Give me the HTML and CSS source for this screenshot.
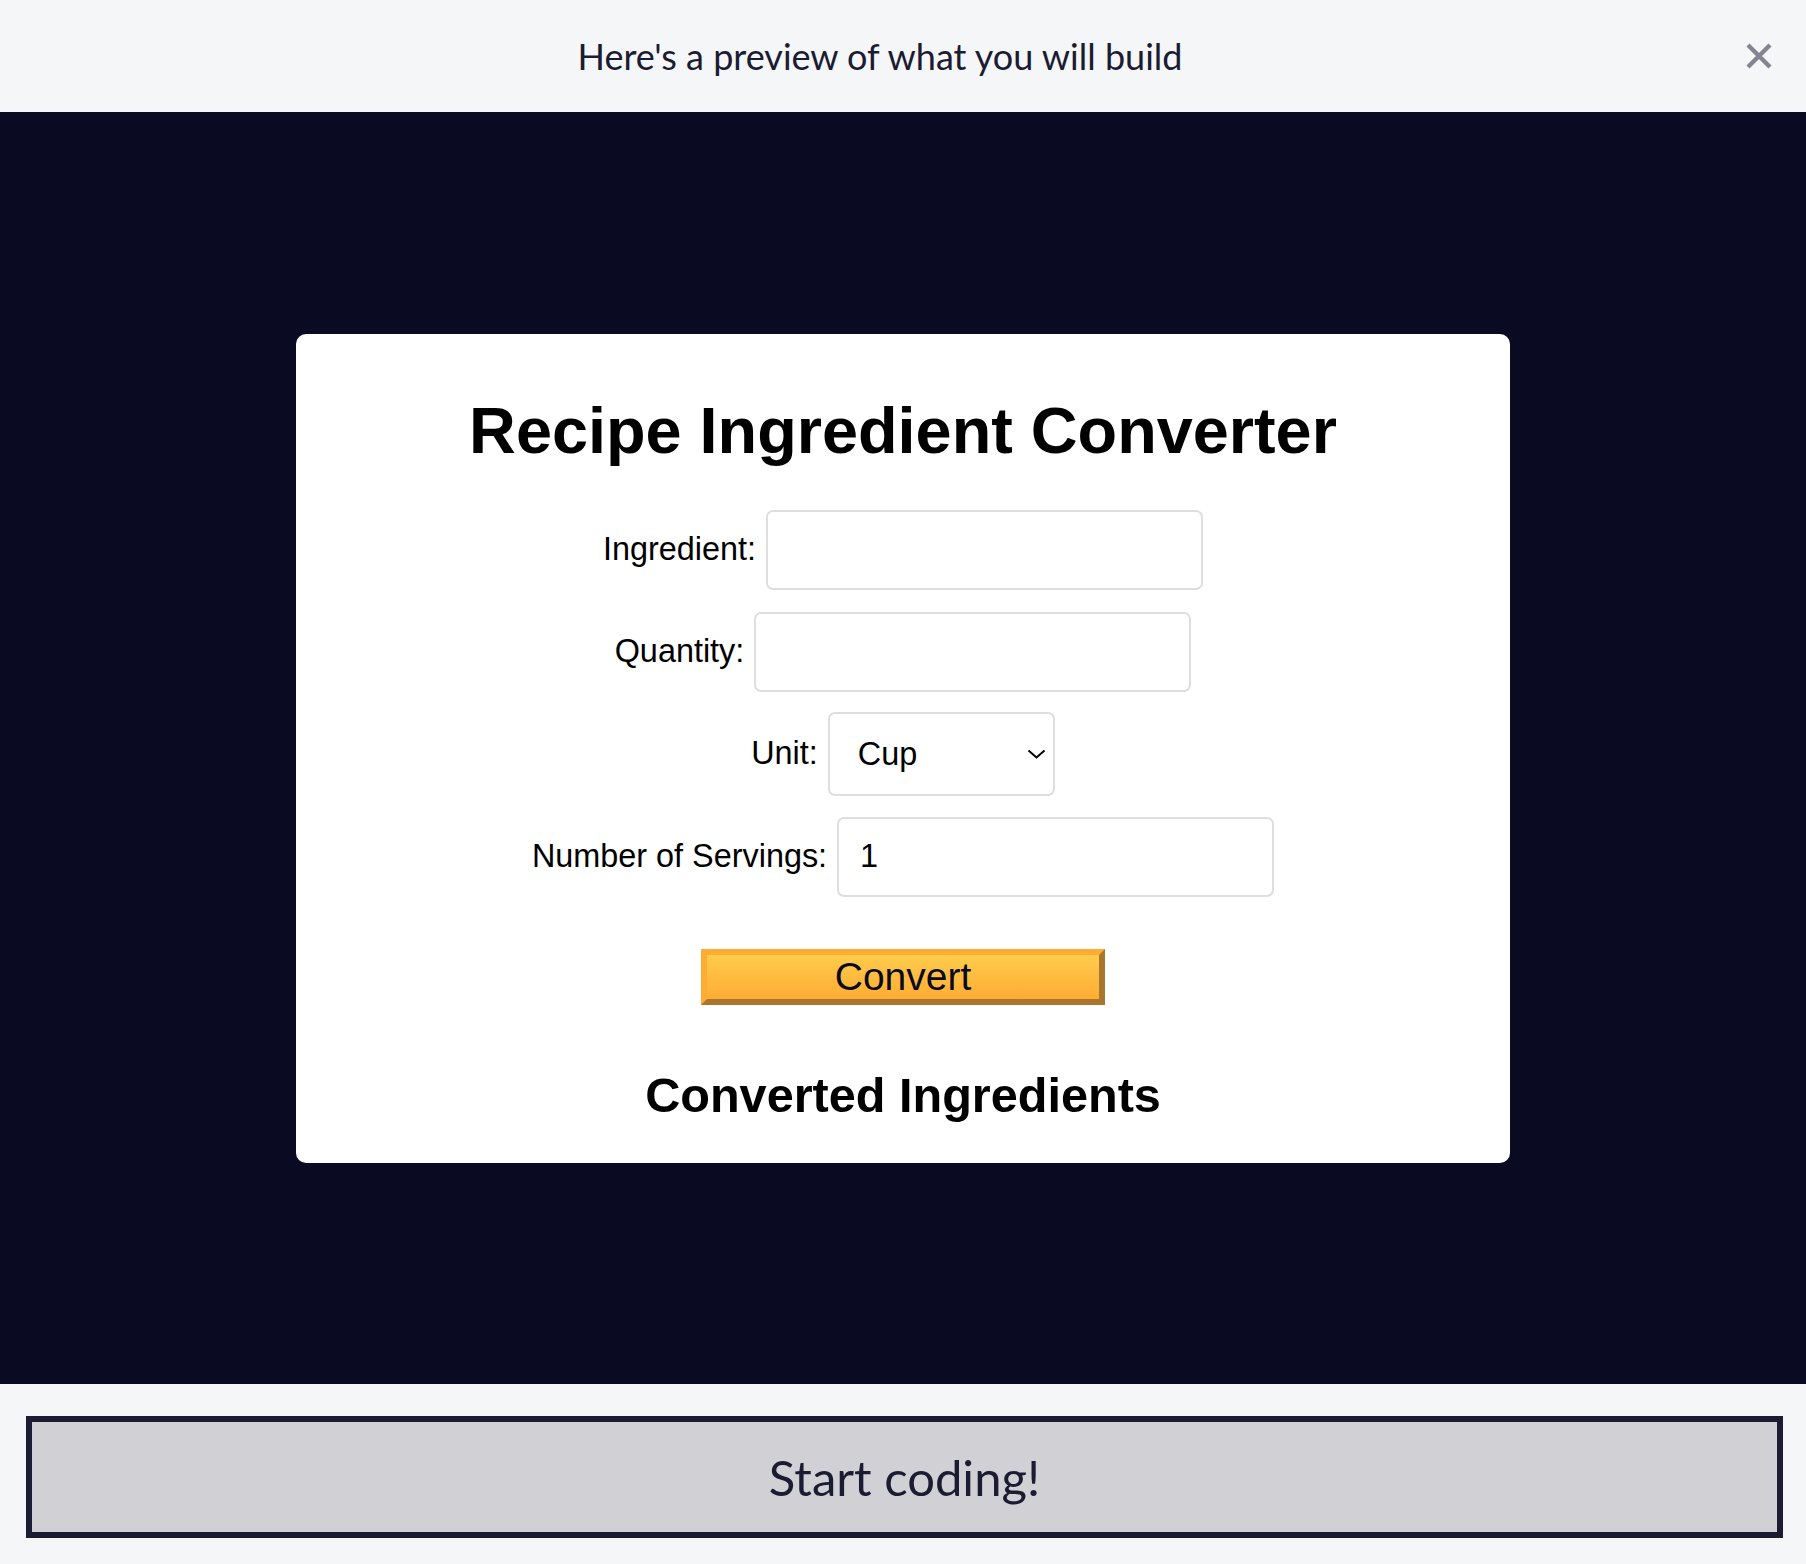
FILE: index.html
```html
<!DOCTYPE html>
<html lang="en">
<head>
<meta charset="utf-8">
<title>Preview</title>
<link rel="stylesheet" href="styles.css">
</head>
<body>
<div class="page">
  <header class="topbar">
    <p class="topbar-title">Here's a preview of what you will build</p>
    <button class="close" type="button" aria-label="Close">
      <svg width="26" height="26" viewBox="0 0 26 26"><path d="M2 2 L24 24 M24 2 L2 24" stroke="#858591" stroke-width="4.4" fill="none"/></svg>
    </button>
  </header>
  <main class="preview">
    <div class="card">
      <h1 class="card-title">Recipe Ingredient Converter</h1>
      <form class="form">
        <div class="row row-1">
          <label class="label" for="ingredient">Ingredient:</label>
          <input class="field" id="ingredient" type="text">
        </div>
        <div class="row row-2">
          <label class="label" for="quantity">Quantity:</label>
          <input class="field" id="quantity" type="number">
        </div>
        <div class="row row-3">
          <label class="label" for="unit">Unit:</label>
          <div class="select-wrap">
            <select class="select" id="unit">
              <option>Cup</option>
              <option>Gram</option>
              <option>Ounce</option>
              <option>Teaspoon</option>
              <option>Tablespoon</option>
            </select>
            <svg class="chevron" width="19" height="10" viewBox="0 0 19 10"><path d="M1.5 1.5 L9.5 8.5 L17.5 1.5" stroke="#000" stroke-width="2" fill="none"/></svg>
          </div>
        </div>
        <div class="row row-4">
          <label class="label" for="servings">Number of Servings:</label>
          <input class="field" id="servings" type="text" value="1">
        </div>
        <button class="convert" type="button">Convert</button>
      </form>
      <h2 class="result-title">Converted Ingredients</h2>
    </div>
  </main>
  <footer class="footer">
    <button class="start" type="button">Start coding!</button>
  </footer>
</div>
</body>
</html>
```

FILE: styles.css
```css
html, body {
  margin: 0;
  padding: 0;
}

body {
  background: #f5f6f7;
  font-family: "Lato", "Liberation Sans", sans-serif;
}

.page {
  width: 1806px;
  height: 1564px;
  display: flex;
  flex-direction: column;
}

.topbar {
  height: 112px;
  flex: 0 0 112px;
  background: #f5f6f7;
  display: flex;
  align-items: center;
  padding-right: 34px;
  box-sizing: border-box;
}

.topbar-title {
  flex: 1;
  margin: 0 -14px 0 0;
  text-align: center;
  font-family: "Lato", sans-serif;
  font-size: 36px;
  color: #1b1b32;
}

.close {
  width: 26px;
  height: 26px;
  padding: 0;
  border: 0;
  background: none;
  display: flex;
  position: relative;
}

.preview {
  flex: 0 0 1272px;
  background: #0a0a23;
  display: flex;
  align-items: center;
  justify-content: center;
}

.card {
  width: 1214px;
  background: #fff;
  border-radius: 10px;
  padding: 17px 0 0;
  box-sizing: border-box;
  font-family: "Liberation Sans", Arial, sans-serif;
  color: #000;
  text-align: center;
}

.card-title {
  font-size: 64.8px;
  font-weight: bold;
  margin: 42px 0 42px;
}

.form {
  display: flex;
  flex-direction: column;
  align-items: center;
}

.row {
  display: flex;
  align-items: center;
  justify-content: center;
  gap: 10px;
}

.row-1 { margin-bottom: 22px; }
.row-2 { margin-bottom: 20px; }
.row-3 { margin-bottom: 21px; }

.label {
  font-size: 32.4px;
  color: #000;
}

.field {
  width: 437px;
  height: 80px;
  box-sizing: border-box;
  border: 2px solid #dedede;
  border-radius: 7px;
  padding: 0 21px;
  font-family: "Liberation Sans", Arial, sans-serif;
  font-size: 32.4px;
  color: #000;
  background: #fff;
  outline: none;
  -moz-appearance: textfield;
}

.field::-webkit-outer-spin-button,
.field::-webkit-inner-spin-button {
  -webkit-appearance: none;
  margin: 0;
}

.select-wrap {
  position: relative;
  display: flex;
}

.select {
  width: 227px;
  height: 84px;
  box-sizing: border-box;
  border: 2px solid #dedede;
  border-radius: 7px;
  padding: 0 0 0 28px;
  font-family: "Liberation Sans", Arial, sans-serif;
  font-size: 32.4px;
  color: #000;
  background: #fff;
  -webkit-appearance: none;
  appearance: none;
  outline: none;
}

.chevron {
  position: absolute;
  right: 9px;
  top: 37px;
  pointer-events: none;
}

.convert {
  margin-top: 52px;
  width: 404px;
  height: 56px;
  box-sizing: border-box;
  border-width: 6px;
  border-style: solid;
  border-color: #feac32 #a97630 #a97630 #feac32;
  background-image: linear-gradient(#fecc4c, #ffac33);
  font-family: "Liberation Sans", Arial, sans-serif;
  font-size: 39px;
  color: #0a0a23;
  padding: 0;
  line-height: 1;
}

.result-title {
  font-size: 48.6px;
  font-weight: bold;
  margin: 62px 0 40px;
}

.footer {
  flex: 1;
  background: #f5f6f7;
  padding: 32px 23px 26px 26px;
  box-sizing: border-box;
  display: flex;
}

.start {
  flex: 1;
  height: 122px;
  box-sizing: border-box;
  border: 6px solid #1b1b32;
  background: #d0d0d5;
  font-family: "Lato", sans-serif;
  font-size: 49px;
  color: #1b1b32;
  padding: 0;
}
```
